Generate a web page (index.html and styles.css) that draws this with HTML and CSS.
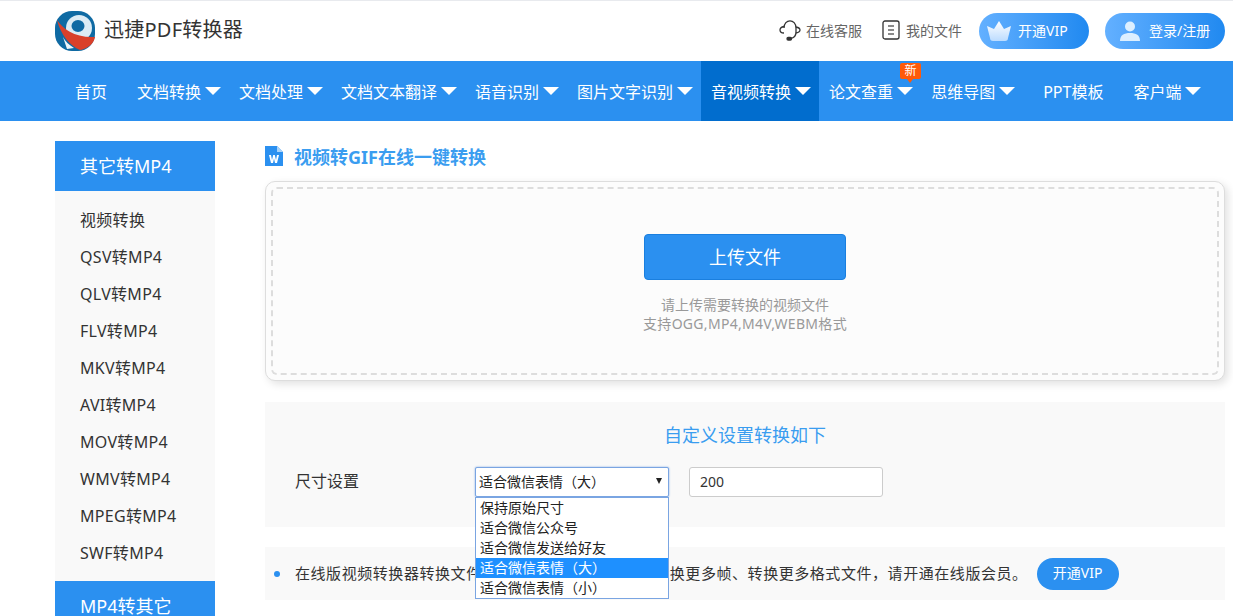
FILE: index.html
```html
<!DOCTYPE html>
<html lang="zh-CN">
<head>
    <meta charset="UTF-8">
    <title>视频转GIF在线一键转换</title>
    <link rel="stylesheet" href="styles.css">
</head>
<body>
    <header class="topbar">
        <div class="brand">
            <svg class="brand-logo" viewBox="0 0 40 40" width="40" height="40">
                <rect x="0" y="0" width="40" height="40" rx="17" fill="#0f6aa3"/>
                <ellipse cx="24" cy="17" rx="13" ry="13" fill="#dcecf5"/>
                <ellipse cx="23" cy="15" rx="6.500" ry="6" fill="#0f6aa3"/>
                <path d="M2 9 C8 18 20 27 40 26 C39 33 32 38 25 39 C14 34 6 24 2 9Z" fill="#d9402a"/>
                <path d="M8 26 C10 30 14 34 19 37 L12 38 Z" fill="#eef5f9"/>
            </svg>
            <span class="brand-name">迅捷PDF转换器</span>
        </div>
        <div class="top-links">
            <a class="top-link">
                <svg viewBox="0 0 22 22" width="22" height="22" fill="none" stroke="#333" stroke-width="1.300">
                    <path d="M5 9 C5 -0.500 17 -0.500 17 9 V13 C17 16.500 15 19 11.500 19.500"/>
                    <path d="M5 7.500 C2.500 8 1 9.500 1 11 C1 12.500 2.500 14 5 14"/>
                    <path d="M17 8 C19.500 8.500 21 9.500 21 11 C21 12.500 19.500 13.500 17 14"/>
                    <rect x="8" y="18.500" width="4.500" height="2.500" rx="1.200" fill="#333"/>
                </svg>
                在线客服
            </a>
            <a class="top-link">
                <svg viewBox="0 0 18 20" width="18" height="20" fill="none" stroke="#333" stroke-width="1.300">
                    <rect x="1" y="1" width="16" height="18" rx="2"/>
                    <path d="M6 6 H12 M6 10 H12 M6 14 H12" stroke="#666"/>
                </svg>
                我的文件
            </a>
            <a class="pill-btn pill-vip">
                <svg viewBox="0 0 24 20" width="24" height="20">
                    <defs>
                        <linearGradient id="crownFill" x1="0" y1="0" x2="0" y2="1">
                            <stop offset="0" stop-color="#ffffff"/>
                            <stop offset="1" stop-color="#bcdcff"/>
                        </linearGradient>
                    </defs>
                    <path d="M0 5 L7 8 L12 0 L17 8 L24 5 L21 17 C21 19 20 20 18 20 H6 C4 20 3 19 3 17 Z" fill="url(#crownFill)"/>
                </svg>
                开通VIP
            </a>
            <a class="pill-btn pill-login">
                <svg viewBox="0 0 20 20" width="20" height="20" fill="#dcefff">
                    <circle cx="10" cy="5.500" r="5"/>
                    <path d="M0 20 C0 14 4 12 10 12 C16 12 20 14 20 20 Z"/>
                </svg>
                登录/注册
            </a>
        </div>
    </header>

    <nav class="mainnav">
        <a class="nav-item plain">首页</a>
        <a class="nav-item">文档转换<i class="caret"></i></a>
        <a class="nav-item">文档处理<i class="caret"></i></a>
        <a class="nav-item">文档文本翻译<i class="caret"></i></a>
        <a class="nav-item">语音识别<i class="caret"></i></a>
        <a class="nav-item">图片文字识别<i class="caret"></i></a>
        <a class="nav-item active">音视频转换<i class="caret"></i></a>
        <a class="nav-item">论文查重<i class="caret"></i><span class="new-badge">新</span></a>
        <a class="nav-item">思维导图<i class="caret"></i></a>
        <a class="nav-item plain">PPT模板</a>
        <a class="nav-item">客户端<i class="caret"></i></a>
    </nav>

    <div class="page">
        <aside class="sidebar">
            <h3 class="side-title">其它转MP4</h3>
            <ul class="side-list">
                <li>视频转换</li>
                <li>QSV转MP4</li>
                <li>QLV转MP4</li>
                <li>FLV转MP4</li>
                <li>MKV转MP4</li>
                <li>AVI转MP4</li>
                <li>MOV转MP4</li>
                <li>WMV转MP4</li>
                <li>MPEG转MP4</li>
                <li>SWF转MP4</li>
            </ul>
            <h3 class="side-title">MP4转其它</h3>
        </aside>

        <main class="content">
            <h2 class="page-title">
                <svg viewBox="0 0 18 20" width="18" height="20">
                    <path d="M0 0 H12 L18 6 V20 H0 Z" fill="#2b90f0"/>
                    <path d="M12 0 L18 6 H12 Z" fill="#a9d3f9"/>
                    <path d="M4 9 H6 L7 14 L8.200 9 H9.800 L11 14 L12 9 H14 L12 17 H10 L9 12.500 L8 17 H6 Z" fill="#fff"/>
                </svg>
                视频转GIF在线一键转换
            </h2>

            <section class="upload-box">
                <div class="upload-inner">
                    <button class="upload-btn">上传文件</button>
                    <p class="upload-hint">请上传需要转换的视频文件<br><span class="hint-formats">支持OGG,MP4,M4V,WEBM格式</span></p>
                </div>
            </section>

            <section class="settings">
                <h3 class="settings-title">自定义设置转换如下</h3>
                <div class="settings-row">
                    <label class="settings-label">尺寸设置</label>
                    <div class="select-wrap">
                        <div class="select-box">适合微信表情（大）<i class="select-caret"></i></div>
                        <ul class="select-menu">
                            <li>保持原始尺寸</li>
                            <li>适合微信公众号</li>
                            <li>适合微信发送给好友</li>
                            <li class="selected">适合微信表情（大）</li>
                            <li>适合微信表情（小）</li>
                        </ul>
                    </div>
                    <input class="size-input" type="text" value="200">
                </div>
            </section>

            <section class="tip">
                <i class="tip-dot"></i>
                <span class="tip-text">在线版视频转换器转换文件大小不能超过20M，如需转换更多帧、转换更多格式文件，请开通在线版会员。</span>
                <a class="tip-btn">开通VIP</a>
            </section>
        </main>
    </div>
</body>
</html>
```

FILE: styles.css
```css
* {
    box-sizing: border-box;
    margin: 0;
    padding: 0;
}

html, body {
    height: 616px;
    overflow: hidden;
}

body {
    font-family: "Noto Sans", "Noto Sans CJK SC", sans-serif;
    background-color: #fff;
    color: #333;
}

ul {
    list-style: none;
}

.topbar {
    height: 61px;
    border-top: 1px solid #e8eaee;
    padding: 0 8px 0 55px;
    display: flex;
    align-items: center;
    justify-content: space-between;
}

.brand {
    display: flex;
    align-items: center;
    gap: 9px;
}

.brand-name {
    margin-bottom: 6px;
    font-size: 20px;
    letter-spacing: 0.25px;
    color: #333;
}

.top-links {
    display: flex;
    align-items: center;
}

.top-link {
    display: flex;
    align-items: center;
    gap: 5px;
    padding-bottom: 2px;
    font-size: 14px;
    color: #666;
    margin-right: 20px;
}

.top-link + .top-link {
    gap: 6px;
    margin-right: 17px;
}

.pill-btn {
    height: 36px;
    padding-bottom: 2px;
    border-radius: 18px;
    display: flex;
    align-items: center;
    font-size: 14px;
    color: #fff;
    background: linear-gradient(90deg, #63b0ff, #2089f0);
}

.pill-btn svg {
    margin-top: 2px;
}

.pill-vip {
    width: 110px;
    padding-left: 8px;
    gap: 7px;
    margin-right: 16px;
}

.pill-login {
    width: 120px;
    padding-left: 15px;
    gap: 9px;
}

.mainnav {
    height: 60px;
    padding-left: 55px;
    background-color: #2b90f0;
    display: flex;
}

.nav-item {
    position: relative;
    display: flex;
    align-items: center;
    padding: 0 8px 0 10px;
    font-size: 16px;
    color: #fff;
}

.nav-item.plain {
    padding: 0 20px;
}

.nav-item.active {
    background-color: #016dce;
}

.caret {
    width: 0;
    height: 0;
    margin-left: 4px;
    border-left: 8px solid transparent;
    border-right: 8px solid transparent;
    border-top: 8px solid #fff;
}

.new-badge {
    position: absolute;
    top: 2px;
    left: 81px;
    width: 21px;
    height: 16px;
    border-radius: 2px;
    background-color: #ff5a09;
    font-size: 12px;
    line-height: 16px;
    text-align: center;
}

.new-badge::after {
    content: "";
    position: absolute;
    top: 16px;
    left: 7px;
    border-left: 3px solid transparent;
    border-right: 3px solid transparent;
    border-top: 4px solid #ff5a09;
}

.page {
    padding: 20px 8px 0 55px;
    display: flex;
    gap: 50px;
}

.sidebar {
    width: 160px;
    flex: none;
}

.side-title {
    height: 50px;
    line-height: 50px;
    padding-left: 25px;
    font-size: 18px;
    font-weight: normal;
    color: #fff;
    background-color: #2b90f0;
}

.side-list {
    background-color: #f9f9f9;
    padding: 11px 0 9px;
}

.side-list li {
    height: 37px;
    line-height: 37px;
    padding-left: 25px;
    font-size: 16px;
    letter-spacing: 0.3px;
}

.content {
    width: 960px;
    flex: none;
}

.page-title {
    height: 20px;
    margin: 5px 0 15px;
    display: flex;
    align-items: flex-start;
    gap: 11px;
    font-size: 18px;
    line-height: 22px;
    color: #3a9df0;
}

.upload-box {
    height: 200px;
    padding: 5px;
    border: 1px solid #ddd;
    border-radius: 10px;
    background-color: #fcfcfc;
    box-shadow: 3px 3px 8px rgba(0, 0, 0, 0.12);
}

.upload-inner {
    height: 100%;
    padding-top: 45px;
    border: 2px dashed #ddd;
    border-radius: 6px;
    display: flex;
    flex-direction: column;
    align-items: center;
}

.upload-btn {
    width: 202px;
    height: 46px;
    padding-bottom: 2px;
    border: 1px solid #1a7fdf;
    border-radius: 4px;
    background-color: #2b90f0;
    color: #fff;
    font-family: inherit;
    font-size: 18px;
}

.upload-hint {
    margin-top: 15px;
    font-size: 14px;
    line-height: 19px;
    color: #999;
    text-align: center;
}

.hint-formats {
    letter-spacing: 0.3px;
}

.settings {
    height: 125px;
    margin-top: 21px;
    padding-top: 20px;
    background-color: #f9f9f9;
}

.settings-title {
    height: 26px;
    font-size: 18px;
    line-height: 26px;
    font-weight: normal;
    color: #3a9df0;
    text-align: center;
}

.settings-row {
    margin-top: 19px;
    padding-left: 30px;
    display: flex;
    align-items: flex-start;
}

.settings-label {
    width: 180px;
    font-size: 16px;
    line-height: 28px;
}

.select-wrap {
    position: relative;
    width: 194px;
    margin-right: 20px;
}

.select-box {
    height: 30px;
    padding: 0 0 2px 3px;
    border: 1px solid #7aa5e2;
    border-radius: 2px;
    box-shadow: 0 0 2px #7aa5e2;
    background-color: #fff;
    display: flex;
    align-items: center;
    justify-content: space-between;
    font-size: 14px;
    color: #222;
}

.select-caret {
    width: 0;
    height: 0;
    margin-right: 6px;
    border-left: 3.500px solid transparent;
    border-right: 3.500px solid transparent;
    border-top: 6px solid #222;
}

.select-menu {
    position: absolute;
    top: 30px;
    left: 0;
    width: 194px;
    border: 1px solid #7aa5e2;
    background-color: #fff;
    font-size: 14px;
    color: #222;
    z-index: 5;
}

.select-menu li {
    height: 20px;
    line-height: 19px;
    padding-left: 4px;
}

.select-menu .selected {
    background-color: #1e90ff;
    color: #fff;
}

.size-input {
    width: 194px;
    height: 30px;
    padding: 0 0 2px 10px;
    border: 1px solid #ccc;
    border-radius: 3px;
    font-family: inherit;
    font-size: 14px;
    color: #333;
}

.tip {
    height: 53px;
    margin-top: 20px;
    background-color: #f9f9f9;
    display: flex;
    align-items: center;
    padding-left: 9px;
}

.tip-dot {
    width: 6px;
    height: 6px;
    margin-right: 15px;
    border-radius: 50%;
    background-color: #2b90f0;
}

.tip-text {
    font-size: 15px;
    letter-spacing: 0.560px;
    white-space: nowrap;
    margin-top: -2px;
}

.tip-btn {
    width: 82px;
    height: 32px;
    margin-left: 9px;
    border-radius: 16px;
    background-color: #2b90f0;
    color: #fff;
    font-size: 14px;
    line-height: 30px;
    text-align: center;
}
```
